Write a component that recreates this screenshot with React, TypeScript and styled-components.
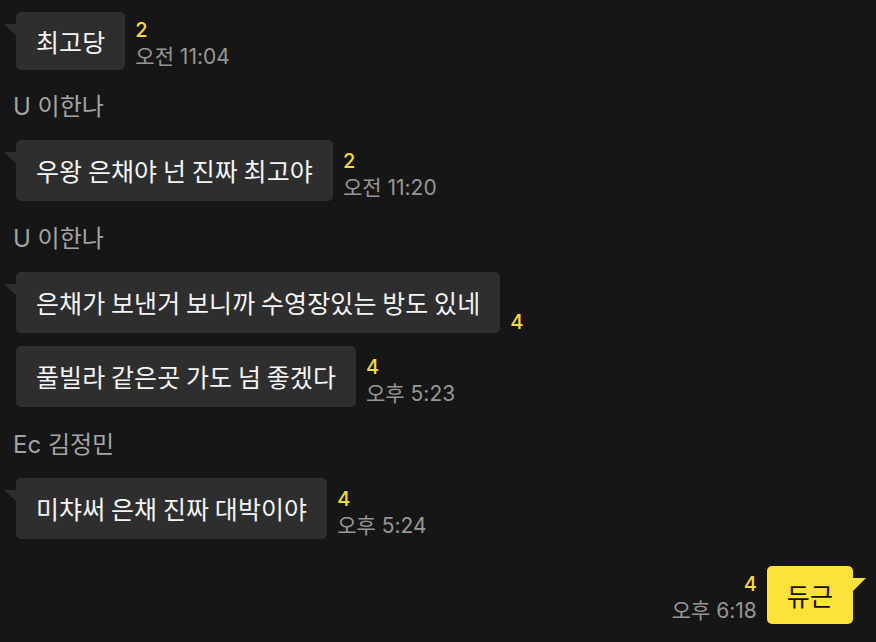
import React from "react";
import styled, { createGlobalStyle, css } from "styled-components";

const Global = createGlobalStyle`
  html, body { margin: 0; padding: 0; background: #161616; }
  body { font-family: "Noto Sans CJK KR", "Noto Sans", sans-serif; }
`;

const Chat = styled.div`
  width: 876px;
  height: 642px;
  box-sizing: border-box;
  padding: 12px 23px 0 16px;
  display: flex;
  flex-direction: column;
  overflow: hidden;
`;

const Group = styled.div<{ $mt?: number }>`
  display: flex;
  flex-direction: column;
  gap: 13px;
  margin-top: ${(p) => p.$mt ?? 0}px;
`;

const Name = styled.div`
  margin-left: -3px;
  margin-bottom: 6px;
  font-family: "Inter", "Noto Sans CJK KR", sans-serif;
  font-size: 24px;
  line-height: 28px;
  color: #a4a4a4;
`;

const Row = styled.div<{ $mine?: boolean }>`
  display: flex;
  align-items: flex-end;
  gap: 10px;
  flex-direction: ${(p) => (p.$mine ? "row-reverse" : "row")};
`;

const Bubble = styled.div<{ $tail?: boolean; $mine?: boolean; $compact?: boolean }>`
  position: relative;
  border-radius: 5px;
  padding: ${(p) => (p.$compact ? "15px 20px 14px" : "16px 20px")};
  font-size: 25px;
  line-height: 29px;
  letter-spacing: 0.1px;
  white-space: nowrap;
  background: ${(p) => (p.$mine ? "#fde23a" : "#2e2e2e")};
  color: ${(p) => (p.$mine ? "#111" : "#f4f4f4")};
  ${(p) =>
    p.$tail &&
    !p.$mine &&
    css`
      &::before {
        content: "";
        position: absolute;
        left: -12px;
        top: 12px;
        width: 13px;
        height: 12px;
        background: #2e2e2e;
        clip-path: polygon(0 0, 100% 0, 100% 100%);
      }
    `}
  ${(p) =>
    p.$tail &&
    p.$mine &&
    css`
      &::after {
        content: "";
        position: absolute;
        right: -13px;
        top: 12px;
        width: 14px;
        height: 14px;
        background: #fde23a;
        clip-path: polygon(0 0, 100% 0, 0 100%);
      }
    `}
`;

const Meta = styled.div<{ $mine?: boolean }>`
  display: flex;
  flex-direction: column;
  gap: 3px;
  align-items: ${(p) => (p.$mine ? "flex-end" : "flex-start")};
  font-family: "Inter", "Noto Sans CJK KR", sans-serif;
`;

const Unread = styled.span`
  font-size: 20px;
  line-height: 22px;
  font-weight: 500;
  color: #f5dc3c;
`;

const Time = styled.span`
  font-size: 21px;
  line-height: 26px;
  color: #979797;
`;

type Msg = { text: string; unread?: number; time?: string; tail?: boolean; compact?: boolean };

function Message({ m, mine }: { m: Msg; mine?: boolean }) {
  return (
    <Row $mine={mine}>
      <Bubble $tail={m.tail} $mine={mine} $compact={m.compact}>
        {m.text}
      </Bubble>
      <Meta $mine={mine}>
        {m.unread !== undefined && <Unread>{m.unread}</Unread>}
        {m.time && <Time>{m.time}</Time>}
      </Meta>
    </Row>
  );
}

export default function App() {
  return (
    <>
      <Global />
      <Chat>
        <Group>
          <Message m={{ text: "최고당", unread: 2, time: "오전 11:04", tail: true, compact: true }} />
        </Group>
        <Group $mt={23}>
          <Name>U 이한나</Name>
          <Message m={{ text: "우왕 은채야 넌 진짜 최고야", unread: 2, time: "오전 11:20", tail: true }} />
        </Group>
        <Group $mt={24}>
          <Name>U 이한나</Name>
          <Message m={{ text: "은채가 보낸거 보니까 수영장있는 방도 있네", unread: 4, tail: true }} />
          <Message m={{ text: "풀빌라 같은곳 가도 넘 좋겠다", unread: 4, time: "오후 5:23" }} />
        </Group>
        <Group $mt={24}>
          <Name>Ec 김정민</Name>
          <Message m={{ text: "미챠써 은채 진짜 대박이야", unread: 4, time: "오후 5:24", tail: true }} />
        </Group>
        <Group $mt={27}>
          <Message mine m={{ text: "듀근", unread: 4, time: "오후 6:18", tail: true, compact: true }} />
        </Group>
      </Chat>
    </>
  );
}
